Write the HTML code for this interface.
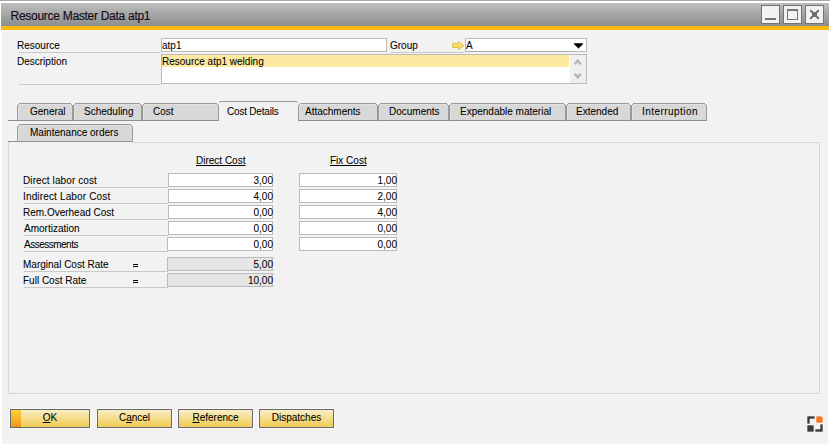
<!DOCTYPE html>
<html><head><meta charset="utf-8">
<style>
*{margin:0;padding:0;box-sizing:border-box}
html,body{width:830px;height:445px;overflow:hidden;background:#fff}
body{position:relative;font-family:"Liberation Sans",sans-serif;font-size:10px;color:#000;-webkit-text-stroke:0.06px #000}
.a{position:absolute}
.t{position:absolute;font-size:10px;line-height:12px;white-space:nowrap;color:#000}
#top{left:0;top:0;width:830px;height:1px;background:#a9a9a9}
#title{left:1px;top:3px;width:828px;height:23px;background:linear-gradient(#bdbebd,#8f9090 95%,#8d9196 95%)}
#orange{left:1px;top:26px;width:828px;height:4px;background:#fdb913}
#content{left:2px;top:30px;width:826px;height:414px;background:#f2f2f2}
.wb{position:absolute;top:5px;width:19px;height:19px;border:1px solid #727272;background:#f2f2f2}
.ul{position:absolute;height:1px;background:#c9c9c9}
.inp{position:absolute;height:14px;border:1px solid #b8babb;background:#fff}
.num{position:absolute;height:14px;border:1px solid #b8babb;background:#fff;text-align:right;font-size:10px;line-height:12px;padding-right:0px}
.ro{background:#e6e6e6}
.num span{position:relative;left:1px;top:1px}
.tab{position:absolute;top:103px;height:18px;border:1px solid #999;border-bottom:1px solid #8f8f8f;background:#d8d8d8;box-shadow:inset 1px 1px 0 #e0e0e0}
.tab::before{content:"";position:absolute;left:-1px;right:-1px;top:-1px;height:2px;background:linear-gradient(#999,#999) 1px 1px/1px 1px no-repeat,linear-gradient(#999,#999) right 1px top 1px/1px 1px no-repeat,linear-gradient(#f6f6f6,#f6f6f6) left top/2px 2px no-repeat,linear-gradient(#f6f6f6,#f6f6f6) right top/2px 2px no-repeat}
.tab span{position:absolute;top:2px;font-size:10px;line-height:12px;white-space:nowrap;color:#000}
.btn{position:absolute;top:409px;height:19px;border:1px solid #66676b;box-shadow:0 0 0 1px #fafafa;background:linear-gradient(#faeec4 0%,#f7e3a2 30%,#f4d97f 60%,#f1cf5c 90%,#f3d46a 100%);text-align:center;font-size:10px;line-height:16px;color:#000}
</style></head><body>
<div class="a" id="top"></div>
<div class="a" id="title"></div>
<div class="t" style="left:10.5px;top:8.5px;font-size:12px;letter-spacing:-0.28px;line-height:14px;color:#140814;-webkit-text-stroke:0.12px #140814">Resource Master Data atp1</div>
<div class="wb" style="left:761px"><div class="a" style="left:3px;top:12px;width:11px;height:2px;background:#747474"></div></div>
<div class="wb" style="left:783px"><div class="a" style="left:3px;top:3px;width:11px;height:11px;border:1px solid #747474;border-top-width:2px"></div></div>
<div class="wb" style="left:805px"><svg class="a" style="left:2px;top:2px" width="13" height="13" viewBox="0 0 13 13"><path d="M2.8 2.8L10.2 10.2M10.2 2.8L2.8 10.2" stroke="#6e6e6e" stroke-width="2" stroke-linecap="round"/><rect x="4" y="4" width="5" height="5" fill="#6e6e6e"/></svg></div>
<div class="a" id="orange"></div>
<div class="a" id="content"></div>

<!-- header -->
<div class="t" style="left:17px;top:40px">Resource</div>
<div class="ul" style="left:19px;top:52px;width:142px"></div>
<div class="inp" style="left:161px;top:38px;width:226px"></div>
<div class="t" style="left:162px;top:40px">atp1</div>
<div class="t" style="left:17px;top:56px">Description</div>
<div class="ul" style="left:19px;top:84px;width:142px"></div>
<div class="inp" style="left:161px;top:54px;width:426px;height:30px"></div>
<div class="a" style="left:162px;top:55px;width:407px;height:12px;background:#fdeaa0"></div>
<div class="a" style="left:570px;top:55px;width:16px;height:28px;background:#efefef"></div>
<div class="t" style="left:162px;top:56px">Resource atp1 welding</div>
<div class="t" style="left:390px;top:40px">Group</div>
<div class="ul" style="left:391px;top:52px;width:74px"></div>
<div class="inp" style="left:465px;top:38px;width:122px"></div>
<div class="t" style="left:466px;top:40px">A</div>
<div class="a" style="left:466px;top:51px;width:104px;height:1px;background:#a9abac"></div>
<svg class="a" style="left:451px;top:40px" width="14" height="11" viewBox="0 0 14 11"><defs><linearGradient id="ag" x1="0" y1="0" x2="0" y2="1"><stop offset="0" stop-color="#fbeb8a"/><stop offset="1" stop-color="#efd043"/></linearGradient></defs><path d="M1.5 3.5H7.5V1.5L12.8 5.5L7.5 9.5V7.5H1.5Z" fill="url(#ag)" stroke="#dcbc3c" stroke-width="0.9" stroke-linejoin="round"/></svg>
<svg class="a" style="left:572px;top:41px" width="13" height="9" viewBox="0 0 13 9"><path d="M2.2 2.8H10.8L6.5 7Z" fill="#000" stroke="#000" stroke-width="1" stroke-linejoin="round"/></svg>
<svg class="a" style="left:570px;top:55px" width="16" height="28" viewBox="0 0 16 28"><path d="M4.7 9.3L7.7 5.6L10.7 9.3M4.7 18.7L7.7 22.4L10.7 18.7" fill="none" stroke="#b5b5b5" stroke-width="2.3"/></svg>

<!-- tabs -->
<div class="ul" style="left:8px;top:120px;width:699px;background:#8f8f8f"></div>
<div class="tab" style="left:17px;width:56px"><span style="left:12px">General</span></div>
<div class="tab" style="left:73px;width:69px"><span style="left:10px">Scheduling</span></div>
<div class="tab" style="left:142px;width:77px"><span style="left:10px">Cost</span></div>
<div class="a" style="left:219px;top:101px;width:79px;height:20px;background:#f2f2f2;border-top:1px solid #999"></div>
<div class="a" style="left:219px;top:101px;width:1px;height:2px;background:#f2f2f2"></div>
<div class="a" style="left:219px;top:102px;width:1px;height:1px;background:#999"></div>
<div class="a" style="left:297px;top:101px;width:1px;height:2px;background:#f2f2f2"></div>
<div class="a" style="left:297px;top:102px;width:1px;height:1px;background:#999"></div>
<span class="t" style="left:227px;top:106px;letter-spacing:-0.2px">Cost Details</span>
<div class="tab" style="left:298px;width:80px"><span style="left:6px">Attachments</span></div>
<div class="tab" style="left:378px;width:71px"><span style="left:10px">Documents</span></div>
<div class="tab" style="left:449px;width:117px"><span style="left:10px">Expendable material</span></div>
<div class="tab" style="left:566px;width:65px"><span style="left:9px">Extended</span></div>
<div class="tab" style="left:631px;width:76px"><span style="left:10px;letter-spacing:0.45px">Interruption</span></div>
<div class="ul" style="left:133px;top:142px;width:687px;background:#d6d6d6"></div>
<div class="ul" style="left:8px;top:141px;width:125px;background:#8f8f8f"></div>
<div class="tab" style="left:17px;top:124px;width:116px"><span style="left:12px">Maintenance orders</span></div>
<!-- panel -->
<div class="a" style="left:8px;top:142px;width:812px;height:252px;border:1px solid #d6d6d6;border-top:none"></div>

<!-- cost details -->
<div class="t" style="left:196px;top:155px;text-decoration:underline">Direct Cost</div>
<div class="t" style="left:330px;top:155px;text-decoration:underline">Fix Cost</div>

<div class="t" style="left:23px;top:175px;letter-spacing:0.1px">Direct labor cost</div>
<div class="ul" style="left:24px;top:187px;width:144px"></div>
<div class="t" style="left:23px;top:191px;letter-spacing:0.15px">Indirect Labor Cost</div>
<div class="ul" style="left:24px;top:203px;width:144px"></div>
<div class="t" style="left:23px;top:207px">Rem.Overhead Cost</div>
<div class="ul" style="left:24px;top:219px;width:144px"></div>
<div class="t" style="left:24px;top:223px">Amortization</div>
<div class="ul" style="left:24px;top:235px;width:144px"></div>
<div class="t" style="left:24px;top:239px;letter-spacing:-0.5px">Assessments</div>
<div class="ul" style="left:24px;top:251px;width:144px"></div>
<div class="t" style="left:23px;top:259px">Marginal Cost Rate</div>
<div class="a" style="left:133px;top:264px;width:5px;height:3px;border-top:1px solid #000;border-bottom:1px solid #000"></div>
<div class="ul" style="left:24px;top:271px;width:144px"></div>
<div class="t" style="left:23px;top:275px">Full Cost Rate</div>
<div class="a" style="left:133px;top:280px;width:5px;height:3px;border-top:1px solid #000;border-bottom:1px solid #000"></div>
<div class="ul" style="left:24px;top:287px;width:144px"></div>

<div class="num" style="left:168px;top:173px;width:105px"><span>3,00</span></div>
<div class="num" style="left:168px;top:189px;width:105px"><span>4,00</span></div>
<div class="num" style="left:168px;top:205px;width:105px"><span>0,00</span></div>
<div class="num" style="left:168px;top:221px;width:105px"><span>0,00</span></div>
<div class="num" style="left:167px;top:237px;width:106px"><span>0,00</span></div>
<div class="num ro" style="left:167px;top:257px;width:106px"><span>5,00</span></div>
<div class="num ro" style="left:167px;top:273px;width:106px"><span>10,00</span></div>

<div class="num" style="left:299px;top:173px;width:98px"><span>1,00</span></div>
<div class="num" style="left:299px;top:189px;width:98px"><span>2,00</span></div>
<div class="num" style="left:299px;top:205px;width:98px"><span>4,00</span></div>
<div class="num" style="left:299px;top:221px;width:98px"><span>0,00</span></div>
<div class="num" style="left:299px;top:237px;width:98px"><span>0,00</span></div>

<!-- buttons -->
<div class="btn" style="left:10px;width:80px"><div class="a" style="left:0;top:0;width:10px;height:17px;background:linear-gradient(#fdd23c,#f6b42a 50%,#f29318)"></div><span style="position:relative"><u>O</u>K</span></div>
<div class="btn" style="left:97px;width:75px">C<u>a</u>ncel</div>
<div class="btn" style="left:178px;width:75px"><u>R</u>eference</div>
<div class="btn" style="left:259px;width:75px">Dispatches</div>

<!-- bottom right icon -->
<svg class="a" style="left:806px;top:415px" width="18" height="18" viewBox="0 0 18 18">
<rect x="0" y="0" width="18" height="18" fill="none"/>
<path d="M1 1h8v3h-5v5h-3z" fill="#3c3c3c" stroke="#fff" stroke-width="0.6"/>
<path d="M10 1h4.5a2.5 2.5 0 0 1 2.5 2.5v4.5h-7z" fill="#f47a20" stroke="#fff" stroke-width="0.6"/>
<rect x="1" y="10" width="7" height="7" fill="#3c3c3c" stroke="#fff" stroke-width="0.6"/>
<path d="M14 9h3v8h-8v-3h5z" fill="#3c3c3c" stroke="#fff" stroke-width="0.6"/>
</svg>
</body></html>
